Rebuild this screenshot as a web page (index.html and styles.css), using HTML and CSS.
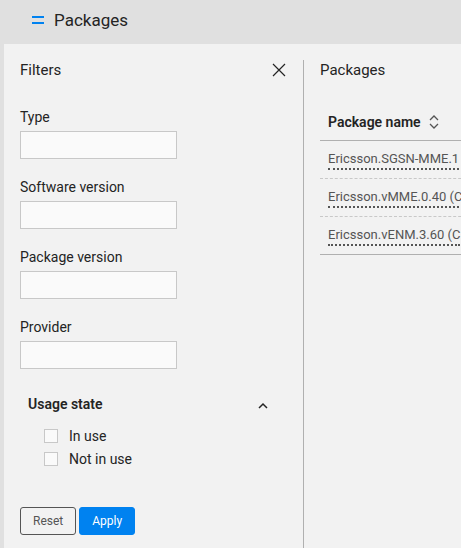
FILE: index.html
```html
<!DOCTYPE html>
<html lang="en">
<head>
<meta charset="utf-8">
<title>Packages</title>
<link rel="stylesheet" href="styles.css">
</head>
<body>
<header class="app-bar">
  <button class="icon-button" type="button" aria-label="Menu">
    <svg width="12" height="8" viewBox="0 0 12 8" fill="#0082f0"><path d="M0 0h12v2H0zM0 6h12v2H0z"/></svg>
  </button>
  <h1 class="app-title">Packages</h1>
</header>
<main class="content">
  <form class="filters">
    <div class="panel-head">
      <h2 class="panel-title">Filters</h2>
      <button class="icon-button" type="button" aria-label="Close filters">
        <svg width="14" height="14" viewBox="0 0 14 14" fill="none" stroke="#242424" stroke-width="1.2"><path d="M1 1l12 12M13 1L1 13"/></svg>
      </button>
    </div>
    <div class="field"><label for="type">Type</label><input class="text-input" id="type" type="text"></div>
    <div class="field"><label for="software">Software version</label><input class="text-input" id="software" type="text"></div>
    <div class="field"><label for="package">Package version</label><input class="text-input" id="package" type="text"></div>
    <div class="field"><label for="provider">Provider</label><input class="text-input" id="provider" type="text"></div>
    <button class="accordion" type="button" aria-expanded="true">
      <span>Usage state</span>
      <svg width="10" height="10" viewBox="0 0 10 10" fill="none" stroke="#242424" stroke-width="1.5"><path d="M1 9l4-4 4 4"/></svg>
    </button>
    <div class="options">
      <label class="option"><input class="checkbox" type="checkbox">In use</label>
      <label class="option"><input class="checkbox" type="checkbox">Not in use</label>
    </div>
    <div class="actions">
      <button class="button" type="reset">Reset</button>
      <button class="button primary" type="button">Apply</button>
    </div>
  </form>
  <section class="results">
    <div class="panel-head"><h2 class="panel-title">Packages</h2></div>
    <table class="table">
      <thead>
        <tr><th scope="col"><button class="sort" type="button">Package name
          <svg width="10" height="14" viewBox="0 0 10 14" fill="none" stroke="#555" stroke-width="1.3"><path d="M1 5l4-4 4 4M1 9l4 4 4-4"/></svg>
        </button></th></tr>
      </thead>
      <tbody>
        <tr><td><a class="link" href="#">Ericsson.SGSN-MME.1</a></td></tr>
        <tr><td><a class="link" href="#">Ericsson.vMME.0.40 (C</a></td></tr>
        <tr><td><a class="link" href="#">Ericsson.vENM.3.60 (C</a></td></tr>
      </tbody>
    </table>
  </section>
</main>
</body>
</html>
```
FILE: styles.css
```css
* { box-sizing: border-box; }

body {
  display: flex;
  flex-direction: column;
  min-height: 100vh;
  margin: 0;
  background: #e0e0e0;
  color: #242424;
  font: 14px/20px Roboto, "Noto Sans", sans-serif;
}

h1, h2 { margin: 0; font-weight: 400; }
button, input { margin: 0; font: inherit; color: inherit; }
svg { display: block; }

.app-bar {
  display: flex;
  align-items: center;
  gap: 10px;
  height: 44px;
  padding: 0 32px 4px;
}

.app-title { font-size: 17px; line-height: 24px; }

.icon-button {
  padding: 0;
  border: 0;
  background: none;
}

.content {
  display: flex;
  flex: 1;
  margin-left: 4px;
  padding: 16px 0 0 16px;
  background: #f2f2f2;
}

.filters {
  flex: 0 0 284px;
  padding-right: 17px;
  border-right: 1px solid #b0b0b0;
}

.results {
  flex: 1;
  min-width: 0;
  padding-left: 16px;
  overflow: hidden;
}

.panel-head {
  display: flex;
  align-items: center;
  justify-content: space-between;
  height: 20px;
}

.panel-title { font-size: 15px; line-height: 20px; }

.field {
  display: flex;
  flex-direction: column;
  align-items: flex-start;
  gap: 4px;
  margin-top: 18px;
}

.panel-head + .field { margin-top: 27px; }

.text-input {
  width: 157px;
  height: 28px;
  padding: 0 8px;
  border: 1px solid #c8c8c8;
  background: #fafafa;
}

.accordion {
  display: flex;
  align-items: center;
  justify-content: space-between;
  width: 100%;
  margin-top: 25px;
  padding: 0 18px 0 8px;
  border: 0;
  background: none;
  font-weight: 600;
}

.options {
  display: grid;
  gap: 3px;
  margin-top: 12px;
  padding-left: 24px;
}

.option {
  display: flex;
  align-items: center;
  gap: 11px;
}

.checkbox {
  width: 14px;
  height: 14px;
  border: 1px solid #c8c8c8;
  background: #fafafa;
  appearance: none;
}

.checkbox:checked { background: #0082f0; }

.actions {
  display: flex;
  gap: 3px;
  margin-top: 38px;
}

.button {
  height: 28px;
  padding: 0 12px;
  border: 1px solid #555;
  border-radius: 3px;
  background: none;
  color: #555;
  font-size: 12px;
}

.primary {
  border-color: #0082f0;
  background: #0082f0;
  color: #fff;
}

.table {
  width: 100%;
  margin-top: 22px;
  border-collapse: collapse;
  border-bottom: 1px solid #b0b0b0;
  white-space: nowrap;
}

th, td {
  height: 38px;
  padding: 0 8px;
  text-align: left;
}

th {
  padding-top: 2px;
  border-bottom: 1px solid #b0b0b0;
}

td { border-top: 1px dashed #c8c8c8; }
tbody tr:first-child td { border-top: 0; }

.sort {
  display: flex;
  align-items: center;
  gap: 8px;
  padding: 0;
  border: 0;
  background: none;
  font-weight: 600;
}

.link {
  display: inline-block;
  border-bottom: 2px dotted #555;
  color: #555;
  font-size: 13px;
  line-height: 18px;
  text-decoration: none;
}
```
